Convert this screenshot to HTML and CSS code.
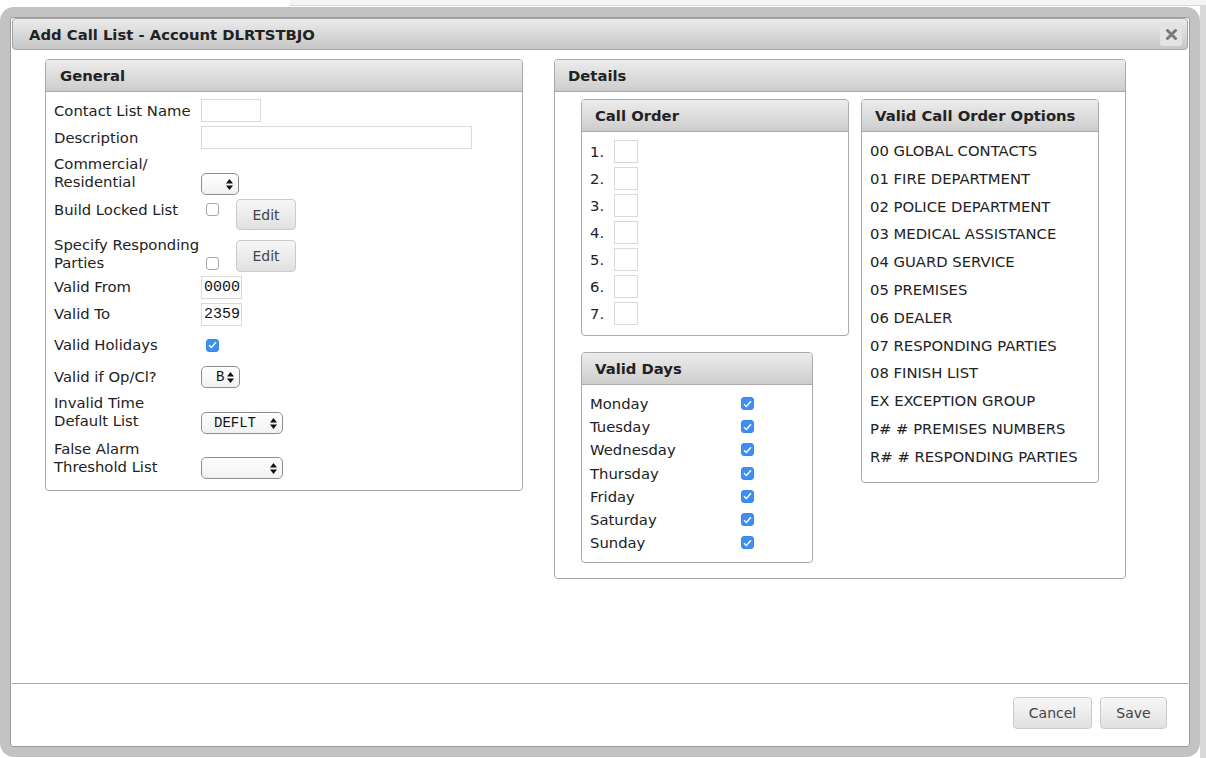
FILE: index.html
```html
<!DOCTYPE html>
<html lang="en">
<head>
    <meta charset="UTF-8">
    <meta name="viewport" content="width=device-width, initial-scale=1.0">
    <title>Add Call List - Account DLRTSTBJO</title>
    <link rel="stylesheet" href="styles.css">
</head>
<body>
    <div class="dialog">
        <div class="dialog-inner">
            <div class="titlebar">
                <h1>Add Call List - Account DLRTSTBJO</h1>
                <button class="close" title="Close"><svg width="11" height="11" viewBox="0 0 11 11"><path d="M1.5 1.5L9.5 9.5M9.5 1.5L1.5 9.5" stroke="#7a7a7a" stroke-width="3" stroke-linecap="round"/></svg></button>
            </div>

            <div class="content">
                <!-- General -->
                <div class="panel general">
                    <div class="panel-head">General</div>
                    <div class="panel-body">
                        <div class="row r1">
                            <label class="lbl">Contact List Name</label>
                            <input class="txt name" type="text">
                        </div>
                        <div class="row r2">
                            <label class="lbl">Description</label>
                            <input class="txt desc" type="text">
                        </div>
                        <div class="row r3">
                            <label class="lbl top">Commercial/<br>Residential</label>
                            <div class="select sel-small bottom"><span></span><svg width="7" height="11" viewBox="0 0 7 11"><path d="M3.5 0L7 4.5H0Z M3.5 11L7 6.5H0Z" fill="#111"/></svg></div>
                        </div>
                        <div class="row r4">
                            <label class="lbl top">Build Locked List</label>
                            <span class="cb cb-r4"></span>
                            <button class="btn edit e4">Edit</button>
                        </div>
                        <div class="row r5">
                            <label class="lbl">Specify Responding<br>Parties</label>
                            <span class="cb cb-r5"></span>
                            <button class="btn edit e5">Edit</button>
                        </div>
                        <div class="row r6">
                            <label class="lbl">Valid From</label>
                            <input class="txt mono time" type="text" value="0000">
                        </div>
                        <div class="row r7">
                            <label class="lbl">Valid To</label>
                            <input class="txt mono time" type="text" value="2359">
                        </div>
                        <div class="row r8">
                            <label class="lbl">Valid Holidays</label>
                            <span class="cb checked cb-r8"><svg width="9" height="8" viewBox="0 0 9 8"><path d="M1 4.2L3.4 6.5L8 1.2" fill="none" stroke="#fff" stroke-width="1.4"/></svg></span>
                        </div>
                        <div class="row r9">
                            <label class="lbl">Valid if Op/Cl?</label>
                            <div class="select sel-b"><span class="mono">B</span><svg width="7" height="11" viewBox="0 0 7 11"><path d="M3.5 0L7 4.5H0Z M3.5 11L7 6.5H0Z" fill="#111"/></svg></div>
                        </div>
                        <div class="row r10">
                            <label class="lbl top">Invalid Time<br>Default List</label>
                            <div class="select sel-wide bottom"><span class="mono">DEFLT</span><svg width="7" height="11" viewBox="0 0 7 11"><path d="M3.5 0L7 4.5H0Z M3.5 11L7 6.5H0Z" fill="#111"/></svg></div>
                        </div>
                        <div class="row r11">
                            <label class="lbl top">False Alarm<br>Threshold List</label>
                            <div class="select sel-wide bottom"><span></span><svg width="7" height="11" viewBox="0 0 7 11"><path d="M3.5 0L7 4.5H0Z M3.5 11L7 6.5H0Z" fill="#111"/></svg></div>
                        </div>
                    </div>
                </div>

                <!-- Details -->
                <div class="panel details">
                    <div class="panel-head">Details</div>
                    <div class="panel-body">
                        <div class="cols">
                            <div class="col-left">
                                <div class="panel call-order">
                                    <div class="panel-head">Call Order</div>
                                    <div class="panel-body">
                                        <div class="order-row"><span class="num">1.</span><input class="txt slot" type="text"></div>
                                        <div class="order-row"><span class="num">2.</span><input class="txt slot" type="text"></div>
                                        <div class="order-row"><span class="num">3.</span><input class="txt slot" type="text"></div>
                                        <div class="order-row"><span class="num">4.</span><input class="txt slot" type="text"></div>
                                        <div class="order-row"><span class="num">5.</span><input class="txt slot" type="text"></div>
                                        <div class="order-row"><span class="num">6.</span><input class="txt slot" type="text"></div>
                                        <div class="order-row"><span class="num">7.</span><input class="txt slot" type="text"></div>
                                    </div>
                                </div>

                                <div class="panel valid-days">
                                    <div class="panel-head">Valid Days</div>
                                    <div class="panel-body">
                                        <div class="day-row"><span class="day">Monday</span><span class="cb checked"><svg width="9" height="8" viewBox="0 0 9 8"><path d="M1 4.2L3.4 6.5L8 1.2" fill="none" stroke="#fff" stroke-width="1.4"/></svg></span></div>
                                        <div class="day-row"><span class="day">Tuesday</span><span class="cb checked"><svg width="9" height="8" viewBox="0 0 9 8"><path d="M1 4.2L3.4 6.5L8 1.2" fill="none" stroke="#fff" stroke-width="1.4"/></svg></span></div>
                                        <div class="day-row"><span class="day">Wednesday</span><span class="cb checked"><svg width="9" height="8" viewBox="0 0 9 8"><path d="M1 4.2L3.4 6.5L8 1.2" fill="none" stroke="#fff" stroke-width="1.4"/></svg></span></div>
                                        <div class="day-row"><span class="day">Thursday</span><span class="cb checked"><svg width="9" height="8" viewBox="0 0 9 8"><path d="M1 4.2L3.4 6.5L8 1.2" fill="none" stroke="#fff" stroke-width="1.4"/></svg></span></div>
                                        <div class="day-row"><span class="day">Friday</span><span class="cb checked"><svg width="9" height="8" viewBox="0 0 9 8"><path d="M1 4.2L3.4 6.5L8 1.2" fill="none" stroke="#fff" stroke-width="1.4"/></svg></span></div>
                                        <div class="day-row"><span class="day">Saturday</span><span class="cb checked"><svg width="9" height="8" viewBox="0 0 9 8"><path d="M1 4.2L3.4 6.5L8 1.2" fill="none" stroke="#fff" stroke-width="1.4"/></svg></span></div>
                                        <div class="day-row"><span class="day">Sunday</span><span class="cb checked"><svg width="9" height="8" viewBox="0 0 9 8"><path d="M1 4.2L3.4 6.5L8 1.2" fill="none" stroke="#fff" stroke-width="1.4"/></svg></span></div>
                                    </div>
                                </div>
                            </div>

                            <div class="panel options">
                                <div class="panel-head">Valid Call Order Options</div>
                                <div class="panel-body">
                                    <div class="opt">00 GLOBAL CONTACTS</div>
                                    <div class="opt">01 FIRE DEPARTMENT</div>
                                    <div class="opt">02 POLICE DEPARTMENT</div>
                                    <div class="opt">03 MEDICAL ASSISTANCE</div>
                                    <div class="opt">04 GUARD SERVICE</div>
                                    <div class="opt">05 PREMISES</div>
                                    <div class="opt">06 DEALER</div>
                                    <div class="opt">07 RESPONDING PARTIES</div>
                                    <div class="opt">08 FINISH LIST</div>
                                    <div class="opt">EX EXCEPTION GROUP</div>
                                    <div class="opt">P# # PREMISES NUMBERS</div>
                                    <div class="opt">R# # RESPONDING PARTIES</div>
                                </div>
                            </div>
                        </div>
                    </div>
                </div>
            </div>

            <div class="footer">
                <button class="btn cancel">Cancel</button>
                <button class="btn save">Save</button>
            </div>
        </div>
    </div>
</body>
</html>
```

FILE: styles.css
```css
* {
    margin: 0;
    padding: 0;
    box-sizing: border-box;
}

body {
    font-family: 'DejaVu Sans', Verdana, sans-serif;
    font-size: 14.8px;
    color: #222;
    width: 1206px;
    height: 758px;
    overflow: hidden;
    padding-top: 7px;
    background:
        linear-gradient(to bottom, #f3f6f1 0, #f3f6f1 5px, #cfe0c4 5px, #cfe0c4 6px, transparent 6px) 290px 0 / 916px 7px no-repeat,
        linear-gradient(to right, #fff 0, #fff 1200px, #d9d9d9 1200px);
}

.dialog {
    width: 1200px;
    height: 750px;
    padding: 10px;
    background: #c3c3c3;
    border-radius: 14px;
}

.dialog-inner {
    height: 100%;
    background: #fff;
    border: 1px solid #9c9c9c;
    border-radius: 3px;
    display: flex;
    flex-direction: column;
}

/* title bar */
.titlebar {
    height: 32px;
    margin: 0 1px;
    padding: 0 5px 0 16px;
    display: flex;
    align-items: center;
    justify-content: space-between;
    background: linear-gradient(#ebebeb, #c7c7c7);
    border: 1px solid #a4a4a4;
    border-radius: 4px;
}

.titlebar h1 {
    font-size: 14.8px;
    font-weight: bold;
    color: #222;
}

.close {
    width: 22px;
    height: 24px;
    border: none;
    border-radius: 3px;
    background: #e3e3e3;
    display: flex;
    align-items: center;
    justify-content: center;
}

/* layout */
.content {
    flex: 1;
    display: flex;
    align-items: flex-start;
    gap: 31px;
    padding: 9px 0 0 34px;
}

.footer {
    margin: 0 1px;
    height: 63px;
    border-top: 1px solid #a8a8a8;
    display: flex;
    justify-content: flex-end;
    gap: 8px;
    padding: 13px 21px 0 0;
}

/* panels */
.panel {
    border: 1px solid #a9a9a9;
    border-radius: 4px;
    overflow: hidden;
    background: #fff;
}

.panel-head {
    height: 32px;
    line-height: 31px;
    padding-left: 13px;
    font-weight: bold;
    background: linear-gradient(#ececec, #cdcdcd);
    border-bottom: 1px solid #a9a9a9;
}

.general {
    width: 478px;
}

.general .panel-head {
    padding-left: 14px;
}

.general > .panel-body {
    padding: 5px 0 8px 8px;
}

.row {
    display: flex;
    align-items: center;
}

.lbl {
    width: 147px;
    line-height: 18px;
    flex-shrink: 0;
    white-space: nowrap;
}

.lbl.top {
    align-self: flex-start;
}

.bottom {
    align-self: flex-end;
}

.r1, .r2 { height: 27px; }
.r3 { height: 46px; }
.r3 .lbl { margin-top: 4px; }
.r3 .select { margin-bottom: 2px; }
.r4 { height: 36px; }
.r4 .lbl { margin-top: 4px; }
.r5 { height: 41px; }
.r6 { height: 26px; }
.r7 { height: 28px; }
.r8 { height: 34px; }
.r9 { height: 30px; }
.r10 { height: 44px; }
.r10 .lbl { margin-top: 2px; }
.r10 .select { margin-bottom: 2px; }
.r11 { height: 46px; }
.r11 .lbl { margin-top: 4px; }
.r11 .select { margin-bottom: 3px; }

/* form controls */
.txt {
    height: 23px;
    border: 1px solid #dadada;
    background: #fff;
    outline: none;
}

.name { width: 60px; }
.desc { width: 271px; }

.mono {
    font-family: 'Liberation Mono', 'Courier New', monospace;
    color: #111;
}

.time {
    width: 41px;
    font-size: 15px;
    padding-left: 2px;
}

.select {
    height: 22px;
    border: 1px solid #8e8e8e;
    border-radius: 5px;
    background: linear-gradient(#fff, #f1f1f1);
    display: flex;
    align-items: center;
    justify-content: space-between;
    padding: 0 5px 0 10px;
    font-size: 14px;
}

.sel-small { width: 38px; }
.sel-b { width: 39px; padding-left: 14px; }
.sel-wide { width: 82px; padding-left: 12px; }

.cb {
    width: 13px;
    height: 13px;
    border: 1px solid #a8a8a8;
    border-radius: 3px;
    background: #fff;
    display: inline-flex;
    align-items: center;
    justify-content: center;
    flex-shrink: 0;
}

.cb.checked {
    border-color: #3b88ea;
    background: #3d8ff3;
}

.cb-r4 {
    align-self: flex-start;
    margin: 6px 0 0 5px;
}

.cb-r5 {
    align-self: flex-end;
    margin: 0 0 4px 5px;
}

.cb-r8 {
    margin-left: 5px;
}

.btn {
    font-family: 'DejaVu Sans', Verdana, sans-serif;
    font-size: 14px;
    color: #444;
    height: 32px;
    border: 1px solid #cbcbcb;
    border-radius: 4px;
    background: linear-gradient(#f7f7f7, #e1e1e1);
}

.edit {
    width: 60px;
    height: 31px;
    margin-left: 17px;
    align-self: flex-start;
}

.e4 { margin-top: 2px; }
.e5 { margin-top: 7px; height: 32px; }

.cancel { width: 79px; }
.save { width: 67px; }

/* details */
.details {
    width: 572px;
}

.details > .panel-body {
    padding: 7px 0 15px 26px;
}

.cols {
    display: flex;
    align-items: flex-start;
    gap: 12px;
}

.col-left {
    display: flex;
    flex-direction: column;
    gap: 16px;
}

.call-order {
    width: 268px;
}

.call-order .panel-body {
    padding: 6px 0 8px 8px;
}

.order-row {
    height: 27px;
    display: flex;
    align-items: center;
}

.num {
    width: 24px;
}

.slot {
    width: 24px;
}

.valid-days {
    width: 232px;
}

.valid-days .panel-body {
    padding: 7px 0 8px 8px;
}

.day-row {
    height: 23.2px;
    display: flex;
    align-items: center;
}

.day {
    width: 151px;
}

.options {
    width: 238px;
}

.options .panel-body {
    padding: 5px 0 11px 8px;
}

.opt {
    height: 27.8px;
    line-height: 27.8px;
    white-space: nowrap;
}
```
